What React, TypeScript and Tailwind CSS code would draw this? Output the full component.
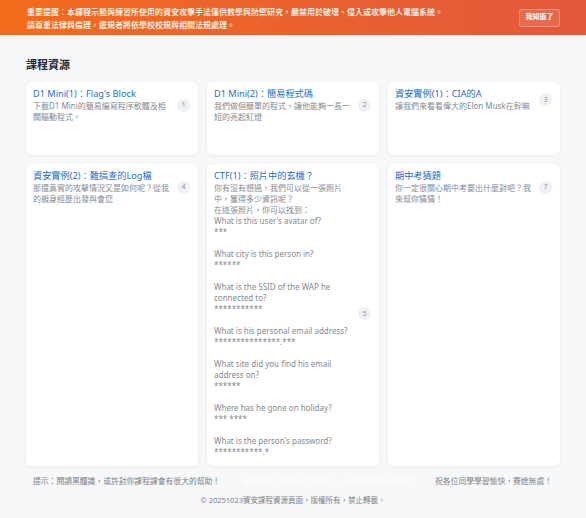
import React from "react";

const font = { fontFamily: '"Noto Sans", "Noto Sans CJK TC", sans-serif' };

type Card = { n: number; title: string; desc: string };

const ctfDesc = `你有沒有想過，我們可以從一張照片中，獲得多少資訊呢？
在這張照片，你可以找到：
What is this user's avatar of?
***

What city is this person in?
******

What is the SSID of the WAP he connected to?
***********

What is his personal email address?
***************.***

What site did you find his email address on?
******

Where has he gone on holiday?
*** ****

What is the person's password?
***********.*`;

const cards: Card[] = [
  { n: 1, title: "D1 Mini(1)：Flag's Block", desc: "下載D1 Mini的簡易編寫程序軟體及相關驅動程式。" },
  { n: 2, title: "D1 Mini(2)：簡易程式碼", desc: "我們做個簡單的程式，讓他能夠一長一短的亮起紅燈" },
  { n: 3, title: "資安實例(1)：CIA的A", desc: "讓我們來看看偉大的Elon Musk在幹嘛" },
  { n: 4, title: "資安實例(2)：難搞查的Log檔", desc: "那還真實的攻擊情況又是如何呢？從我的親身經歷出發與會您" },
  { n: 5, title: "CTF(1)：照片中的玄機？", desc: ctfDesc },
  { n: 7, title: "期中考猜題", desc: "你一定很關心期中考要出什麼對吧？我來幫你猜猜！" },
];

function CardView({ c }: { c: Card }) {
  return (
    <div className="rounded-[6px] bg-white pt-[6px] pb-[9px] pl-[7px] pr-[8px] shadow-[0_1px_4px_rgba(0,0,0,0.06)] min-h-[73px]">
      <div className="flex items-center gap-[6px]">
        <div className="flex-1 min-w-0">
          <div className="text-[9.2px] leading-[12px] text-[#1d6fc4]">{c.title}</div>
          <div className="whitespace-pre-line text-[8px] leading-[11px] text-[#858a93] pr-[2px]">{c.desc}</div>
        </div>
        <div className="flex h-[13px] w-[13px] shrink-0 items-center justify-center rounded-full bg-[#eef0f4] text-[6.5px] text-[#8a8f98]">
          {c.n}
        </div>
      </div>
    </div>
  );
}

export default function App() {
  return (
    <div style={font} className="min-h-[518px] bg-[#f7f8fa]">
      <div className="flex h-[35px] items-center justify-between bg-gradient-to-r from-[#f36b1a] to-[#e3583b] pl-[27px] pr-[26px] shadow-[0_1px_3px_rgba(0,0,0,0.12)]">
        <div className="text-[8px] leading-[13px] font-medium text-white">
          <div>重要提醒：本課程示範與練習所使用的資安攻擊手法僅供教學與防禦研究，嚴禁用於破壞、侵入或攻擊他人電腦系統。</div>
          <div>請尊重法律與倫理，違規者將依學校校規與相關法規處理。</div>
        </div>
        <button className="flex h-[18px] w-[41px] items-center justify-center rounded-[3px] border border-white/30 bg-white/10 text-[7px] font-bold text-white">
          我知道了
        </button>
      </div>
      <div className="px-[26px]">
        <h2 className="pt-[22px] pb-[9px] text-[11px] leading-[16px] font-bold text-[#1f2937]">課程資源</h2>
        <div className="grid grid-cols-3 gap-[9px]">
          {cards.map((c) => (
            <CardView key={c.n} c={c} />
          ))}
        </div>
        <div className="mt-[9px] flex items-center justify-between pl-[7px] pr-[8px] text-[7.8px] leading-[12px] text-[#7b8088]">
          <span>提示：閱讀黑體識，或許對你課程課會有很大的幫助！</span>
          <span className="text-white">答案就藏在你看不到的地方，仔細觀察每一個細節</span>
          <span>祝各位同學學習愉快，賽途無虞！</span>
        </div>
        <div className="mt-[7px] text-center text-[7.5px] leading-[12px] text-[#7b8088]">
          © 20251023資安課程資源頁面，版權所有，禁止轉載。
        </div>
      </div>
    </div>
  );
}
